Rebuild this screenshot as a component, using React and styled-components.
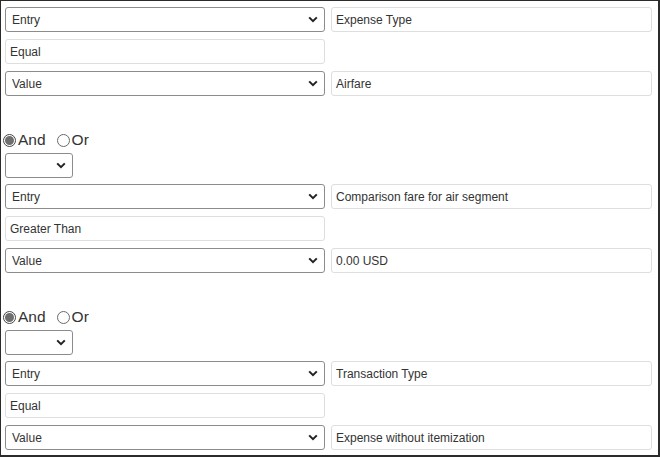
import React from 'react';
import styled, { createGlobalStyle } from 'styled-components';

const GlobalStyle = createGlobalStyle`
    html, body {
        margin: 0;
        padding: 0;
        background: #ffffff;
    }
    body {
        font-family: "Liberation Sans", Arial, sans-serif;
    }
`;

const Frame = styled.div`
    width: 660px;
    height: 457px;
    box-sizing: border-box;
    border-style: solid;
    border-color: #2b2b2b;
    border-width: 1px 2px 2px 1px;
    padding: 6px 0 0 4px;
    background: #ffffff;
    display: flex;
    flex-direction: column;
    overflow: hidden;
`;

const Group = styled.div`
    display: flex;
    flex-direction: column;
    margin-top: ${(p) => (p.$first ? '0' : '35px')};
`;

const Connector = styled.div`
    display: flex;
    flex-direction: column;
    gap: 4px;
    margin-bottom: 6px;
`;

const RadioRow = styled.div`
    display: flex;
    align-items: center;
    height: 18px;
    margin-left: -2px;
    font-size: 15.5px;
    color: #333333;
`;

const RadioOption = styled.label`
    display: flex;
    align-items: center;
    gap: 2px;
    margin-right: ${(p) => (p.$last ? '0' : '11px')};
`;

const RadioDot = styled.span`
    width: 13px;
    height: 13px;
    box-sizing: border-box;
    border-radius: 50%;
    border: 1px solid ${(p) => (p.$checked ? '#444444' : '#6a6a6a')};
    display: flex;
    align-items: center;
    justify-content: center;
    background: #ffffff;

    &::after {
        content: '';
        width: 9px;
        height: 9px;
        border-radius: 50%;
        background: ${(p) => (p.$checked ? '#6e6e6e' : 'transparent')};
    }
`;

const Rows = styled.div`
    display: grid;
    grid-template-columns: 320px 321px;
    column-gap: 6px;
    row-gap: 7px;
`;

const SelectBox = styled.div`
    width: ${(p) => p.$width || '320px'};
    height: 25px;
    box-sizing: border-box;
    border: 1px solid #8c8c8c;
    border-radius: 3px;
    background: #ffffff;
    display: flex;
    align-items: center;
    justify-content: space-between;
    padding: 0 6px 0 6px;
    font-size: 12px;
    color: #333333;
`;

const Field = styled.div`
    height: 25px;
    box-sizing: border-box;
    border: 1px solid #dedede;
    border-radius: 3px;
    background: #ffffff;
    display: flex;
    align-items: center;
    padding: 0 4px;
    font-size: 12px;
    color: #333333;
`;

const Empty = styled.div``;

const Chevron = () => (
    <svg width="10" height="7" viewBox="0 0 10 7">
        <path d="M1.2 1.4 L5 5.2 L8.8 1.4" fill="none" stroke="#222" strokeWidth="2" />
    </svg>
);

const Select = ({ label, width }) => (
    <SelectBox $width={width}>
        <span>{label}</span>
        <Chevron />
    </SelectBox>
);

const groups = [
    { field: 'Expense Type', op: 'Equal', value: 'Airfare' },
    { field: 'Comparison fare for air segment', op: 'Greater Than', value: '0.00 USD' },
    { field: 'Transaction Type', op: 'Equal', value: 'Expense without itemization' },
];

const Condition = ({ data, first }) => (
    <Group $first={first}>
        {!first && (
            <Connector>
                <RadioRow>
                    <RadioOption>
                        <RadioDot $checked />
                        And
                    </RadioOption>
                    <RadioOption $last>
                        <RadioDot />
                        Or
                    </RadioOption>
                </RadioRow>
                <Select label="" width="68px" />
            </Connector>
        )}
        <Rows>
            <Select label="Entry" />
            <Field>{data.field}</Field>
            <Field>{data.op}</Field>
            <Empty />
            <Select label="Value" />
            <Field>{data.value}</Field>
        </Rows>
    </Group>
);

const App = () => (
    <>
        <GlobalStyle />
        <Frame>
            {groups.map((g, i) => (
                <Condition key={i} data={g} first={i === 0} />
            ))}
        </Frame>
    </>
);

export default App;
